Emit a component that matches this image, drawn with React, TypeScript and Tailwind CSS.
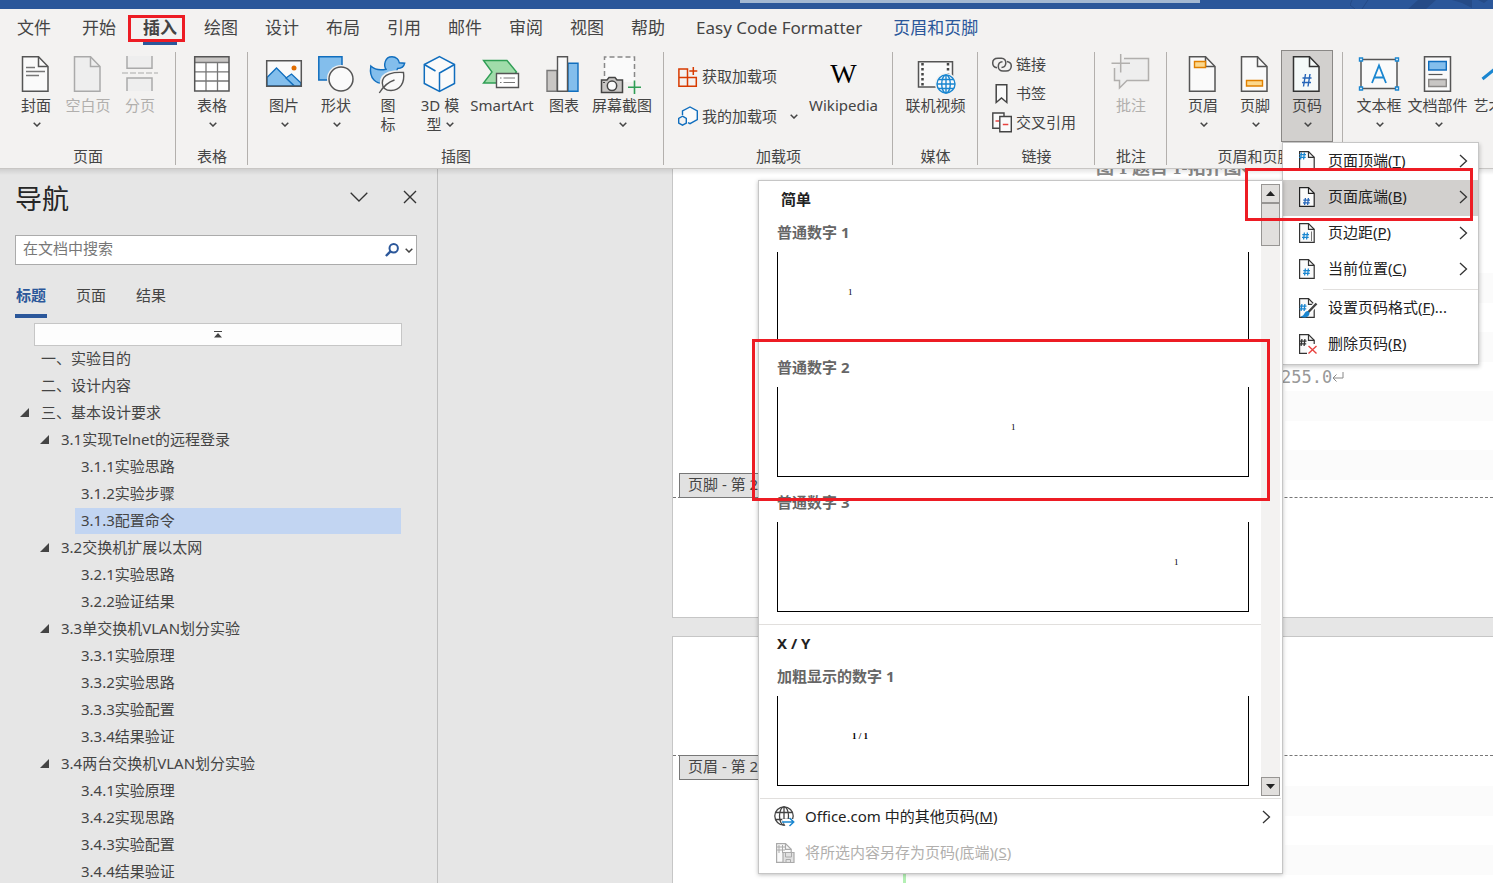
import React from 'react';

interface RibbonItemProps {
    label: React.ReactNode;
    width?: string;
    arrow?: boolean;
    disabled?: boolean;
    active?: boolean;
    children: React.ReactNode;
}

const tabs = ['文件', '开始', '插入', '绘图', '设计', '布局', '引用', '邮件', '审阅', '视图', '帮助'];

const outline = [
    { level: 1, text: '一、实验目的' },
    { level: 1, text: '二、设计内容' },
    { level: 1, text: '三、基本设计要求', open: true },
    { level: 2, text: '3.1实现Telnet的远程登录', open: true },
    { level: 3, text: '3.1.1实验思路' },
    { level: 3, text: '3.1.2实验步骤' },
    { level: 3, text: '3.1.3配置命令', selected: true },
    { level: 2, text: '3.2交换机扩展以太网', open: true },
    { level: 3, text: '3.2.1实验思路' },
    { level: 3, text: '3.2.2验证结果' },
    { level: 2, text: '3.3单交换机VLAN划分实验', open: true },
    { level: 3, text: '3.3.1实验原理' },
    { level: 3, text: '3.3.2实验思路' },
    { level: 3, text: '3.3.3实验配置' },
    { level: 3, text: '3.3.4结果验证' },
    { level: 2, text: '3.4两台交换机VLAN划分实验', open: true },
    { level: 3, text: '3.4.1实验原理' },
    { level: 3, text: '3.4.2实现思路' },
    { level: 3, text: '3.4.3实验配置' },
    { level: 3, text: '3.4.4结果验证' },
];

const indent: Record<number, string> = { 1: 'pl-[20px]', 2: 'pl-[40px]', 3: 'pl-[60px]' };

/* ---------- small shared glyphs ---------- */

const Caret = () => (
    <svg width="8" height="5" viewBox="0 0 8 5" fill="none" stroke="#444" strokeWidth="1.5" className="shrink-0">
        <path d="M.7 .7 4 4 7.3 .7" />
    </svg>
);

const Chevron = () => (
    <svg width="9" height="14" viewBox="0 0 9 14" fill="none" stroke="#333" strokeWidth="1.3" className="shrink-0">
        <path d="M1 1l6.5 6L1 13" />
    </svg>
);

const Icon36: React.FC<{ children: React.ReactNode }> = ({ children }) => (
    <svg width="36" height="36" viewBox="0 0 36 36" fill="none" className="overflow-visible shrink-0">
        {children}
    </svg>
);

const Page: React.FC<{ stroke?: string; fill?: string }> = ({ stroke = '#555', fill = '#fafafa' }) => (
    <g stroke={stroke} strokeWidth="1.5">
        <path d="M4.5 .7H20.5L30 10.5V35.3H4.5Z" fill={fill} />
        <path d="M20.5 .7V10.5H30" />
    </g>
);

const SmallPage: React.FC<{ children?: React.ReactNode; stroke?: string }> = ({ children, stroke = '#333' }) => (
    <svg width="20" height="20" viewBox="0 0 20 20" fill="none" className="overflow-visible shrink-0">
        <path d="M1.6 .6H10.5L16.2 6.3V19.3H1.6Z" fill="#fafafa" stroke={stroke} strokeWidth="1.2" />
        <path d="M10.5 .6V6.3H16.2" stroke={stroke} strokeWidth="1.2" />
        {children}
    </svg>
);

const Hash: React.FC<{ x: number; y: number; color: string }> = ({ x, y, color }) => (
    <path
        transform={`translate(${x} ${y})`}
        d="M2.4 0 1.6 7M5.4 0 4.6 7M.3 2.2H7M0 4.8H6.7"
        stroke={color}
        strokeWidth="1.3"
    />
);

/* ---------- ribbon parts ---------- */

const RibbonItem: React.FC<RibbonItemProps> = ({ label, width = 'w-[52px]', arrow, disabled, active, children }) => (
    <button
        disabled={disabled}
        className={`flex h-[92px] shrink-0 flex-col items-center border pt-[5px] ${width} ${
            active ? 'border-[#8a8886] bg-[#d2d0ce]' : 'border-transparent'
        } ${disabled ? 'text-[#b1afad]' : 'text-[#444]'}`}
    >
        {children}
        <span className="mt-1 text-center text-[15px] leading-[19px] whitespace-nowrap">{label}</span>
        {arrow && (
            <span className="mt-[7px] ml-[2px]">
                <Caret />
            </span>
        )}
    </button>
);

const Group: React.FC<{ title: string; children: React.ReactNode }> = ({ title, children }) => (
    <>
        <section className="flex shrink-0 flex-col pr-[9px] pl-[10px]">
            <div className="flex h-[92px]">{children}</div>
            <h2 className="mt-1 text-center text-[15px] leading-5 whitespace-nowrap text-[#444]">{title}</h2>
        </section>
        <div className="mt-[2px] mb-[3px] w-px shrink-0 bg-[#b3b0ad]" />
    </>
);

const SideButton: React.FC<{ label: string; children: React.ReactNode }> = ({ label, children }) => (
    <button className="flex items-center gap-1 text-[15px] leading-[29px] whitespace-nowrap text-[#444]">
        <svg width="20" height="20" viewBox="0 0 20 20" fill="none" className="shrink-0 overflow-visible">
            {children}
        </svg>
        {label}
    </button>
);

const Ribbon = () => (
    <div className="flex h-[118px] shrink-0 overflow-hidden">
        <Group title="页面">
            <RibbonItem label="封面" arrow>
                <Icon36>
                    <Page />
                    <path d="M8 11.5H17M8 15.5H27M8 19.5H21" stroke="#777" strokeWidth="1.5" />
                </Icon36>
            </RibbonItem>
            <RibbonItem label="空白页" disabled>
                <Icon36>
                    <Page stroke="#aaa" fill="#eee" />
                </Icon36>
            </RibbonItem>
            <RibbonItem label="分页" disabled>
                <Icon36>
                    <g stroke="#aaa" strokeWidth="1.5">
                        <path d="M5 0V12.3H30V0M5 35V22H30V35" fill="#eee" />
                        <path d="M0 17H36" strokeDasharray="6 2" strokeWidth="1.2" />
                    </g>
                </Icon36>
            </RibbonItem>
        </Group>
        <Group title="表格">
            <RibbonItem label="表格" arrow>
                <Icon36>
                    <path d="M.7 .7H35V35H.7Z" fill="#fff" />
                    <path d="M.7 .7H35V6.5H.7Z" fill="#c8c6c4" />
                    <path d="M1 6.5H35M1 15.8H35M1 25H35M12 6.5V35M23.5 6.5V35" stroke="#777" strokeWidth="1.3" />
                    <path d="M.7 .7H35V35H.7Z" stroke="#555" strokeWidth="1.5" />
                </Icon36>
            </RibbonItem>
        </Group>
        <Group title="插图">
            <RibbonItem label="图片" arrow>
                <Icon36>
                    <path d="M.7 4.7H35.3V30.3H.7Z" fill="#fafafa" />
                    <path d="M1 21.5 10.5 12 28.5 30H1Z" fill="#83beec" stroke="#106ebe" strokeWidth="1.3" />
                    <path d="M20 22 25.5 18 35 27V30H28.5Z" fill="#83beec" stroke="#106ebe" strokeWidth="1.3" />
                    <circle cx="28" cy="12" r="2.5" fill="#e06c00" />
                    <path d="M.7 4.7H35.3V30.3H.7Z" stroke="#555" strokeWidth="1.5" />
                </Icon36>
            </RibbonItem>
            <RibbonItem label="形状" arrow>
                <Icon36>
                    <path d="M.8 .7H24V24H.8Z" fill="#83beec" stroke="#106ebe" strokeWidth="1.5" />
                    <circle cx="23" cy="23" r="14" fill="#f3f2f1" />
                    <circle cx="23" cy="23" r="12" fill="#fafafa" stroke="#555" strokeWidth="1.5" />
                </Icon36>
            </RibbonItem>
            <RibbonItem
                label={
                    <>
                        图
                        <br />标
                    </>
                }
            >
                <Icon36>
                    <path
                        d="M.8 10C4.500 13.500 10 14.500 16 13.200C13.500 9.500 14.500 .8 22 .8C26.500 .8 29 4 29.300 6.800L34.700 7.200C34 10.500 31.500 12.500 27.500 12.500C26 15 29 17 25 22C19 28.500 9 29 4 24C.5 20.500 0 15 .8 10Z"
                        fill="#83beec"
                        stroke="#106ebe"
                        strokeWidth="1.4"
                    />
                    <path
                        d="M33.500 16.500C25 16 12 17 12.300 27C12.500 32 16 34.500 21 34.500C30 34.500 35 27 33.500 16.500Z"
                        stroke="#f3f2f1"
                        strokeWidth="5"
                    />
                    <path
                        d="M33.500 16.500C25 16 12 17 12.300 27C12.500 32 16 34.500 21 34.500C30 34.500 35 27 33.500 16.500Z"
                        fill="#fafafa"
                        stroke="#555"
                        strokeWidth="1.4"
                    />
                    <path d="M9.300 37C13 31 18 26 24.500 24" stroke="#555" strokeWidth="1.4" />
                </Icon36>
            </RibbonItem>
            <RibbonItem
                label={
                    <>
                        3D 模<br />
                        <span className="inline-flex items-center gap-1">
                            型 <Caret />
                        </span>
                    </>
                }
            >
                <Icon36>
                    <path d="M17.500 .7 32.500 8.500V27.500L17.500 35.300 2.300 27.500V8.500Z" fill="#fafafa" />
                    <g stroke="#106ebe" strokeWidth="1.5">
                        <path d="M17.500 .7 32.500 8.500V27.500L17.500 35.300 2.300 27.500V8.500Z" />
                        <path d="M32.500 8.500 17.500 17V35.300M2.300 8.500 13.500 15" />
                    </g>
                </Icon36>
            </RibbonItem>
            <RibbonItem label="SmartArt" width="w-[72px]">
                <Icon36>
                    <path d="M-.5 4.500H23L32.500 16 23 27H-.5L8 16Z" fill="#a0dcaa" stroke="#2f9e55" strokeWidth="1.4" />
                    <path d="M12.500 17.500H34.500V31.500H12.500Z" fill="#fff" stroke="#555" strokeWidth="1.4" />
                    <path d="M16 22H17.500M19.500 22H31M16 26.500H17.500M19.500 26.500H31" stroke="#777" strokeWidth="1.2" />
                </Icon36>
            </RibbonItem>
            <RibbonItem label="图表">
                <Icon36>
                    <path d="M1 14.500H11V35.300H1Z" fill="#c8c6c4" stroke="#777" strokeWidth="1.4" />
                    <path d="M22 7.200H32V35.300H22Z" fill="#83beec" stroke="#106ebe" strokeWidth="1.4" />
                    <path d="M11.500 .7H21.500V35.300H11.500Z" fill="#fafafa" stroke="#555" strokeWidth="1.4" />
                </Icon36>
            </RibbonItem>
            <RibbonItem label="屏幕截图" width="w-[64px]" arrow>
                <Icon36>
                    <path d="M.5 1H30.500V26H.5Z" fill="#fafafa" />
                    <path d="M.5 20V1H30.500V23" stroke="#888" strokeWidth="1.5" strokeDasharray="5 3" />
                    <path d="M-2.500 24H3L5 21.500H11L13 24H18.500V36.500H-2.500Z" fill="#c8c6c4" stroke="#444" strokeWidth="1.5" />
                    <circle cx="8" cy="29.800" r="4.700" fill="#fafafa" stroke="#444" strokeWidth="1.5" />
                    <path d="M-1 26.500H1" stroke="#444" />
                    <path d="M30.500 24.500V38M24 31.200H37" stroke="#2f9e55" strokeWidth="1.600" />
                </Icon36>
            </RibbonItem>
        </Group>
        <Group title="加载项">
            <div className="flex w-[130px] flex-col gap-[11px] pt-3 pl-1">
                <SideButton label="获取加载项">
                    <g stroke="#d83b01" strokeWidth="1.500">
                        <path d="M.9 2H9.500V10.500H.9ZM.9 10.500H9.500V19.200H.9ZM9.500 10.500H18.300V19.200H9.500Z" />
                        <path d="M15.300 0V8M11.300 4H19.300" />
                    </g>
                </SideButton>
                <div className="flex items-center gap-[13px]">
                    <SideButton label="我的加载项">
                        <g stroke="#106ebe" strokeWidth="1.400">
                            <path d="M4.500 8V4L12 0 19.300 4V12.500L12 16.700 10 15.700" fill="#fafafa" />
                            <path d="M4.500 9.200 8.300 11.400V16L4.500 18.200.7 16V11.400Z" />
                        </g>
                    </SideButton>
                    <Caret />
                </div>
            </div>
            <RibbonItem label="Wikipedia" width="w-[79px]">
                <span className="flex h-9 items-center font-['Liberation_Serif',serif] text-[28px] leading-9 text-black">W</span>
            </RibbonItem>
        </Group>
        <Group title="媒体">
            <RibbonItem label="联机视频" width="w-[65px]">
                <Icon36>
                    <path d="M.5 5.700H34.500V31H.5Z" fill="#fafafa" stroke="#555" strokeWidth="1.500" />
                    <path d="M4.500 7V30M30 7V19" stroke="#444" strokeWidth="2.500" strokeDasharray="2.500 2.500" />
                    <circle cx="28" cy="28" r="11" fill="#f3f2f1" />
                    <g stroke="#1a86d0" strokeWidth="1.400">
                        <circle cx="28" cy="28" r="9" fill="#fafafa" />
                        <ellipse cx="28" cy="28" rx="4.300" ry="9" />
                        <path d="M28 19V37M19 28H37M20.500 23.500H35.500M20.500 32.500H35.500" />
                    </g>
                </Icon36>
            </RibbonItem>
        </Group>
        <Group title="链接">
            <div className="flex w-[97px] flex-col pl-1">
                <SideButton label="链接">
                    <g stroke="#555" strokeWidth="1.500">
                        <path d="M5 12.800C1.800 12.300 .7 10 .7 8C.7 5 3 3.200 6 3.200H9.500C12.500 3.200 14 5.800 13.800 8.300C13.600 10.500 12 12.500 9.500 12.500" />
                        <path d="M15 6.500C18 7 19.300 9 19.300 11C19.300 14 17 16 14 16H11C8 16 6.300 13.800 6.300 11.500C6.300 8.800 8 6.800 10.500 6.700" />
                    </g>
                </SideButton>
                <SideButton label="书签">
                    <path d="M4.200 .7H14.800V18.500L9.500 14 4.200 18.500Z" fill="#fafafa" stroke="#444" strokeWidth="1.500" />
                </SideButton>
                <SideButton label="交叉引用">
                    <path d="M.8 0H12V15.300H.8Z" fill="#fafafa" stroke="#444" strokeWidth="1.400" />
                    <path d="M3.500 8H7" stroke="#e8423f" strokeWidth="1.500" />
                    <path d="M7.800 3.500H19.300V18.800H7.800Z" fill="#fafafa" stroke="#444" strokeWidth="1.400" />
                    <path d="M10.800 11.500H16.300" stroke="#e8423f" strokeWidth="1.500" />
                </SideButton>
            </div>
        </Group>
        <Group title="批注">
            <RibbonItem label="批注" disabled>
                <Icon36>
                    <g stroke="#b1afad" strokeWidth="1.500">
                        <path d="M11 2.500H35.500V24.500H14L6.500 32V24.500H1.500V12" fill="#eee" />
                        <path d="M7.700 -2V16.500M-1.500 7.300H17" />
                    </g>
                </Icon36>
            </RibbonItem>
        </Group>
        <Group title="页眉和页脚">
            <RibbonItem label="页眉" arrow>
                <Icon36>
                    <Page />
                    <path d="M9.500 5.500H20.500V11.500H9.500Z" fill="#fcd88c" stroke="#e08000" strokeWidth="1.400" />
                </Icon36>
            </RibbonItem>
            <RibbonItem label="页脚" arrow>
                <Icon36>
                    <Page />
                    <path d="M9.500 24.500H25.500V30H9.500Z" fill="#fcd88c" stroke="#e08000" strokeWidth="1.400" />
                </Icon36>
            </RibbonItem>
            <RibbonItem label="页码" arrow active>
                <Icon36>
                    <Page stroke="#333" fill="#f5faf9" />
                    <path d="M16.500 18 14.500 30.500M21 18 19 30.500M13.500 22H22.500M13 26.500H22" stroke="#2565b8" strokeWidth="1.400" />
                </Icon36>
            </RibbonItem>
        </Group>
        <section className="flex shrink-0 pl-[10px]">
            <RibbonItem label="文本框" arrow>
                <Icon36>
                    <path d="M0 3.500H36V32.500H0Z" fill="#fafafa" stroke="#555" strokeWidth="1.500" />
                    <g fill="#fff" stroke="#1a86d0" strokeWidth="1.400">
                        <path d="M-1.500 2H1.500V5H-1.500ZM34.500 2H37.500V5H34.500ZM-1.500 31H1.500V34H-1.500ZM34.500 31H37.500V34H34.500Z" />
                    </g>
                    <path d="M11 27 18 9.500 25 27M13.500 21.500H22.500" stroke="#1a86d0" strokeWidth="1.800" />
                </Icon36>
            </RibbonItem>
            <RibbonItem label="文档部件" width="w-[65px]" arrow>
                <Icon36>
                    <path d="M4.500 .7H30.500V35.300H4.500Z" fill="#fafafa" stroke="#555" strokeWidth="1.500" />
                    <path d="M8.700 5.500H26.300V14H8.700Z" fill="#83beec" stroke="#106ebe" strokeWidth="1.400" />
                    <path d="M8.500 18.500H22.500" stroke="#555" strokeWidth="1.200" />
                    <path d="M8.700 23.500H26.300V30.500H8.700Z" fill="#c8c6c4" stroke="#8a8886" strokeWidth="1.400" />
                </Icon36>
            </RibbonItem>
            <RibbonItem label="艺术字" arrow>
                <Icon36>
                    <path d="M4.500 23 18 12 31 31" stroke="#1a86d0" strokeWidth="3" />
                </Icon36>
            </RibbonItem>
        </section>
    </div>
);

/* ---------- navigation pane ---------- */

const NavigationPane = () => (
    <aside className="flex w-[438px] shrink-0 flex-col overflow-hidden border-r border-[#bfbfbf] text-[#444]">
        <div className="flex items-center pt-3 pr-[20px] pl-[15px]">
            <h1 className="flex-1 text-[27px] leading-9 text-[#262626]">导航</h1>
            <button aria-label="选项" className="mr-[35px] pb-[5px]">
                <svg width="18" height="10" viewBox="0 0 18 10" fill="none" stroke="#333" strokeWidth="1.300">
                    <path d="M.7 .7 9 9 17.300 .7" />
                </svg>
            </button>
            <button aria-label="关闭" className="pb-[5px]">
                <svg width="14" height="14" viewBox="0 0 14 14" fill="none" stroke="#333" strokeWidth="1.400">
                    <path d="M1 1 13 13M13 1 1 13" />
                </svg>
            </button>
        </div>
        <div className="mt-[18px] mr-[20px] ml-[15px] flex h-[30px] items-center border border-[#ababab] bg-white pr-[3px]">
            <input
                aria-label="在文档中搜索"
                placeholder="在文档中搜索"
                className="h-7 min-w-0 flex-1 bg-transparent px-[7px] pb-[5px] text-[15px] outline-none placeholder:text-[#777]"
            />
            <svg width="14" height="14" viewBox="0 0 14 14" fill="none" stroke="#2b579a" strokeWidth="2" className="mr-[6px]">
                <circle cx="8.700" cy="5.200" r="4.200" />
                <path d="M5.700 8.200 .9 13" strokeWidth="2.400" />
            </svg>
            <Caret />
        </div>
        <div className="mt-[20px] ml-[15px] flex gap-[28px] text-[15px]">
            {['标题', '页面', '结果'].map((name, i) => (
                <button
                    key={name}
                    className={`h-[33px] border-b-4 px-px pb-2 leading-[21px] ${
                        i === 0 ? 'border-[#2b579a] font-bold text-[#2b579a]' : 'border-transparent'
                    }`}
                >
                    {name}
                </button>
            ))}
        </div>
        <button
            aria-label="跳转到开头"
            className="mt-[5px] mr-[35px] ml-[34px] flex h-[23px] shrink-0 items-center justify-center border border-[#c6c6c6] bg-[#fdfdfd]"
        >
            <svg width="8" height="7" viewBox="0 0 8 7" fill="#444">
                <path d="M0 0H8V1H0ZM4 2 8 6.500H0Z" />
            </svg>
        </button>
        <ul className="-mt-px mr-[36px]">
            {outline.map((row) => (
                <li key={row.text} className={`flex h-[27px] items-center ${indent[row.level]}`}>
                    <span className="w-[15px] shrink-0">
                        {row.open && (
                            <svg width="9" height="9" viewBox="0 0 9 9" fill="#444">
                                <path d="M9 0V9H0Z" />
                            </svg>
                        )}
                    </span>
                    <button
                        className={`h-[26px] flex-1 px-[6px] pb-[2px] text-left text-[15px] leading-6 whitespace-nowrap ${
                            row.selected ? 'bg-[#c2d5f2]' : ''
                        }`}
                    >
                        {row.text}
                    </button>
                </li>
            ))}
        </ul>
    </aside>
);

/* ---------- document canvas ---------- */

const Bands: React.FC<{ top: string; count: number }> = ({ top, count }) => (
    <div className={`absolute right-0 left-[612px] flex flex-col gap-[29px] ${top}`}>
        {Array.from({ length: count }, (_, i) => (
            <div key={i} className="h-[30px] bg-[#fbfbfb]" />
        ))}
    </div>
);

const Document = () => (
    <main className="relative flex min-w-0 flex-1 flex-col gap-[18px] overflow-hidden pl-[234px]">
        <div className="relative h-[449px] shrink-0 overflow-hidden border-b border-l border-[#c6c6c6] bg-white">
            <Bands top="top-[104px]" count={4} />
            <p className="absolute top-[-13px] left-[423px] font-['Liberation_Serif','Noto_Sans_CJK_SC',serif] text-[18px] leading-6 font-bold whitespace-nowrap text-[#888]">
                图 1 题目 1-拓扑图↵
            </p>
            <p className="absolute top-[196px] left-[608px] flex items-center font-['DejaVu_Sans_Mono',monospace] text-[17px] leading-6 text-[#999]">
                255.0
                <svg width="12" height="10" viewBox="0 0 12 10" fill="none" stroke="#888">
                    <path d="M11 0V6H1M4.500 2.500 1 6 4.500 9.500" />
                </svg>
            </p>
            <div className="absolute top-[328px] right-0 left-0 border-t border-dashed border-[#777]" />
            <div className="absolute top-[304px] left-[6px] h-[25px] w-[120px] border border-[#777] bg-[#e1e1e1] pl-2 text-[15px] leading-5 text-[#444]">
                页脚 - 第 2 节 -
            </div>
        </div>
        <div className="relative flex-1 border-t border-l border-[#c6c6c6] bg-white">
            <Bands top="top-[149px]" count={2} />
            <div className="absolute top-[118px] right-0 left-0 border-t border-dashed border-[#777]" />
            <div className="absolute top-[118px] left-[6px] h-[25px] w-[120px] border border-[#777] bg-[#e1e1e1] pl-2 text-[15px] leading-5 text-[#444]">
                页眉 - 第 2 节 -
            </div>
            <div className="absolute bottom-0 left-[230px] h-[10px] w-[3px] bg-[#b4f0b4]" />
        </div>
    </main>
);

/* ---------- page number menu ---------- */

interface MenuRowProps {
    text: string;
    hotkey: string;
    tail?: string;
    arrow?: boolean;
    selected?: boolean;
    children: React.ReactNode;
}

const MenuRow: React.FC<MenuRowProps> = ({ text, hotkey, tail, arrow, selected, children }) => (
    <button
        className={`flex h-9 w-full items-center pr-[10px] pb-[3px] pl-[15px] text-left text-[15px] whitespace-nowrap text-[#222] ${
            selected ? 'bg-[#d2d0ce]' : ''
        }`}
    >
        {children}
        <span className="ml-[10px] flex-1">
            {text}(<u>{hotkey}</u>){tail}
        </span>
        {arrow && <Chevron />}
    </button>
);

const PageNumberMenu = () => (
    <div className="absolute top-[142px] left-[1282px] z-10 w-[197px] border border-[#c6c6c6] bg-white py-px shadow-[1px_2px_4px_rgba(0,0,0,0.2)]">
        <MenuRow text="页面顶端" hotkey="T" arrow>
            <SmallPage>
                <Hash x={1} y={1.500} color="#1a86d0" />
            </SmallPage>
        </MenuRow>
        <MenuRow text="页面底端" hotkey="B" arrow selected>
            <SmallPage stroke="#222">
                <Hash x={5} y={11} color="#2565b8" />
            </SmallPage>
        </MenuRow>
        <MenuRow text="页边距" hotkey="P" arrow>
            <SmallPage>
                <Hash x={4} y={9.500} color="#1a86d0" />
                <path d="M13.500 8.500V18" stroke="#777" />
            </SmallPage>
        </MenuRow>
        <MenuRow text="当前位置" hotkey="C" arrow>
            <SmallPage>
                <Hash x={5} y={9.500} color="#1a86d0" />
            </SmallPage>
        </MenuRow>
        <div className="my-px ml-10 h-px bg-[#e1dfdd]" />
        <MenuRow text="设置页码格式" hotkey="F" tail="...">
            <SmallPage>
                <Hash x={1.500} y={6} color="#1a86d0" />
                <path d="M18.500 5.500 9.500 15" stroke="#fff" strokeWidth="5" />
                <path d="M18.500 5.500 9.500 15" stroke="#444" strokeWidth="2.400" />
                <path d="M10 13C6 13 7 18 2.500 18.500 6 20.500 11.500 19.500 11.500 15Z" fill="#1a86d0" />
            </SmallPage>
        </MenuRow>
        <MenuRow text="删除页码" hotkey="R">
            <SmallPage>
                <path d="M9 10H20V21H9Z" fill="#fff" />
                <Hash x={1.500} y={5} color="#333" />
                <path d="M10.500 12 18.500 19.500M18.500 12 10.500 19.500" stroke="#e8423f" strokeWidth="1.400" />
            </SmallPage>
        </MenuRow>
    </div>
);

const Preview: React.FC<{ title: string; pad: string; mark: string; bold?: boolean }> = ({ title, pad, mark, bold }) => (
    <figure className="mb-[9px]">
        <figcaption className="mb-1 text-[15px] leading-8 font-bold text-[#666]">{title}</figcaption>
        <div
            className={`h-[90px] border-x border-b border-black pt-[34px] font-['Liberation_Serif',serif] text-[9px] leading-3 text-black ${pad} ${
                bold ? 'font-bold' : ''
            }`}
        >
            {mark}
        </div>
    </figure>
);

const Gallery = () => (
    <div className="absolute top-[180px] left-[758px] z-20 w-[525px] border border-[#c6c6c6] bg-white shadow-[0_1px_4px_rgba(0,0,0,0.25)]">
        <div className="flex">
            <div className="min-w-0 flex-1 pb-[3px]">
                <div className="pr-3 pl-[18px]">
                    <h3 className="h-[35px] pt-[2px] pl-1 text-[15px] leading-8 font-bold text-[#222]">简单</h3>
                    <Preview title="普通数字 1" pad="pl-[70px]" mark="1" />
                    <Preview title="普通数字 2" pad="pl-[233px]" mark="1" />
                    <Preview title="普通数字 3" pad="pl-[396px]" mark="1" />
                </div>
                <div className="mt-3 h-px bg-[#e1dfdd]" />
                <div className="pr-3 pl-[18px]">
                    <h3 className="h-[35px] pt-[2px] text-[15px] leading-8 font-bold text-[#222]">X / Y</h3>
                    <Preview title="加粗显示的数字 1" pad="pl-[74px]" mark="1 / 1" bold />
                </div>
            </div>
            <div className="mt-[3px] mr-[2px] mb-[2px] flex w-[19px] flex-col bg-[#f3f2f1]">
                <button aria-label="向上滚动" className="flex h-[19px] items-center justify-center border border-[#979593] bg-[#e1dfdd]">
                    <svg width="9" height="5" viewBox="0 0 9 5" fill="#222">
                        <path d="M4.500 0 9 5H0Z" />
                    </svg>
                </button>
                <div className="h-[43px] border border-[#979593] bg-[#e1dfdd]" />
                <button
                    aria-label="向下滚动"
                    className="mt-auto flex h-[19px] items-center justify-center border border-[#979593] bg-[#e1dfdd]"
                >
                    <svg width="9" height="5" viewBox="0 0 9 5" fill="#222">
                        <path d="M0 0H9L4.500 5Z" />
                    </svg>
                </button>
            </div>
        </div>
        <div className="mx-px h-px bg-[#e1dfdd]" />
        <button className="flex h-9 w-full items-center pr-[11px] pb-px pl-[15px] text-left text-[15px] text-[#222]">
            <svg width="21" height="21" viewBox="0 0 21 21" fill="none">
                <g stroke="#444" strokeWidth="1.300">
                    <circle cx="10" cy="10" r="9.200" />
                    <ellipse cx="10" cy="10" rx="4.500" ry="9.200" />
                    <path d="M1.500 6.500H18.500M1.500 13.500H18.500M10 .8V19" />
                </g>
                <path d="M8 13H21V21H12Z" fill="#fff" />
                <path d="M8 16H19.500M15.500 12 19.700 16 15.500 20" stroke="#1a86d0" strokeWidth="1.500" />
            </svg>
            <span className="ml-[10px] flex-1">
                Office.com 中的其他页码(<u>M</u>)
            </span>
            <Chevron />
        </button>
        <button disabled className="mb-[2px] flex h-9 w-full items-center pb-px pl-[16px] text-left text-[15px] text-[#b1afad]">
            <SmallPage stroke="#aaa">
                <path d="M2 4H10M2 7H10M4 2V10M7.500 2V10" stroke="#aaa" />
                <path d="M8 9.500H19V19.500H8Z" fill="#e1e1e1" stroke="#aaa" strokeWidth="1.200" />
                <path d="M10.500 9.500V14H16.500V9.500M11 19V16.500H15.500V19" stroke="#aaa" />
            </SmallPage>
            <span className="ml-[10px]">
                将所选内容另存为页码(底端)(<u>S</u>)
            </span>
        </button>
    </div>
);

const App = () => (
    <div className="relative flex h-screen flex-col overflow-hidden bg-[#e6e6e6] font-['Noto_Sans','Noto_Sans_CJK_SC',sans-serif]">
        <div className="relative flex h-[9px] shrink-0 justify-end bg-[#2b579a]">
            <div className="mr-[293px] h-[3px] w-[460px] shrink-0 bg-[#a3b8d2]" />
            <svg width="143" height="9" viewBox="0 0 143 9" className="absolute right-0" fill="#254b87">
                <path d="M58 9 68 0H86L76 9ZM102 0H122V8L112 3ZM128 0H138L134 3Z" />
                <path d="M2 0 0 5 5 9M12 9 18 0" stroke="#254b87" fill="none" />
            </svg>
        </div>

        <header className="shrink-0 border-b border-[#c8c6c4] bg-[#f3f2f1]">
            <nav className="flex h-[41px] gap-[27px] pl-[17px] text-[17px] whitespace-nowrap text-[#444]">
                {tabs.map((tab) => (
                    <button
                        key={tab}
                        className={`relative h-9 border-b-[3px] pt-1 leading-[29px] ${tab === '文件' ? 'mr-1' : ''} ${
                            tab === '插入' ? 'border-[#2b579a] font-bold' : 'border-transparent'
                        }`}
                    >
                        {tab}
                        {tab === '插入' && (
                            <span className="absolute top-[6px] -right-2 -left-[15px] h-[27px] border-[3px] border-[#ed1c24]" />
                        )}
                    </button>
                ))}
                <button className="mx-1 h-9 border-b-[3px] border-transparent pt-1 leading-[29px]">Easy Code Formatter</button>
                <button className="h-9 border-b-[3px] border-transparent pt-1 leading-[29px] text-[#2b579a]">页眉和页脚</button>
            </nav>
            <Ribbon />
        </header>

        <div className="relative flex min-h-0 flex-1">
            <NavigationPane />
            <Document />
            <div className="pointer-events-none absolute inset-x-0 top-0 h-[6px] bg-linear-to-b from-black/10 to-transparent" />
        </div>

        <PageNumberMenu />
        <Gallery />

        {/* red callouts over the chosen menu row and the chosen preview */}
        <div className="pointer-events-none absolute top-[168px] left-[1245px] z-30 h-[53px] w-[228px] border-[3px] border-[#ed1c24]" />
        <div className="pointer-events-none absolute top-[339px] left-[752px] z-30 h-[162px] w-[518px] border-[3px] border-[#ed1c24]" />
    </div>
);

export default App;
